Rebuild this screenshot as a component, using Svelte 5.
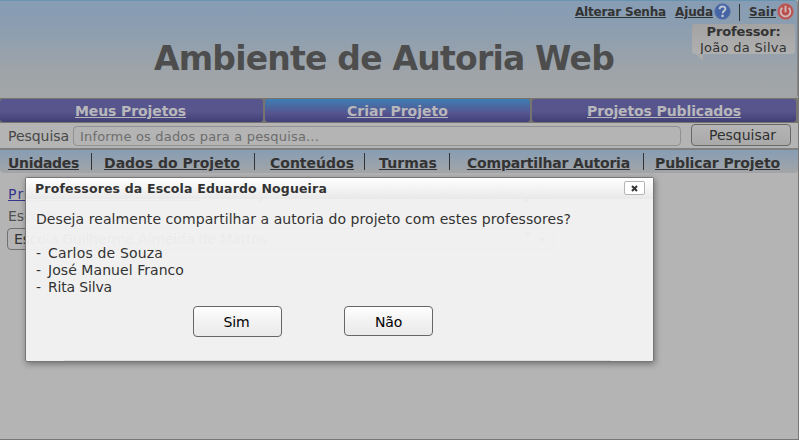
<script>
  const tabs = [
    { label: 'Meus Projetos', width: 264, shift: -2, text: 111 },
    { label: 'Criar Projeto', width: 267, shift: 0, text: 101, active: true },
    { label: 'Projetos Publicados', width: 266, shift: 0, text: 154 }
  ];
  const menu = [
    { label: 'Unidades', start: 8, text: 71 },
    { label: 'Dados do Projeto', start: 12, text: 136 },
    { label: 'Conteúdos', start: 15, text: 84 },
    { label: 'Turmas', start: 14, text: 58 },
    { label: 'Compartilhar Autoria', start: 17, text: 163 },
    { label: 'Publicar Projeto', start: 11, text: 125 }
  ];
  const gaps = [12, 14, 10, 12, 13, 0];
  const people = [
    { name: 'Carlos de Souza', width: 115 },
    { name: 'José Manuel Franco', width: 136 },
    { name: 'Rita Silva', width: 64 }
  ];

  // Spreads a label over a given width by adjusting its letter spacing.
  function fit(node, width) {
    node.style.letterSpacing = '0px';
    const count = node.textContent.length;
    const natural = node.getBoundingClientRect().width;
    node.style.letterSpacing = `${(width - natural) / count}px`;
  }
</script>

<div class="page">
  <header>
    <div class="account">
      <a class="senha" href="#senha"><span use:fit={91}>Alterar Senha</span></a>
      <a class="ajuda" href="#ajuda"><span use:fit={38}>Ajuda</span></a>
      <svg class="help" width="17" height="17" viewBox="0 0 17 17">
        <circle cx="8.5" cy="8.5" r="8" fill="#4464a5" stroke="#7085b0" />
        <path d="M5.6 6.2c0-3.8 6-3.6 5.8-.3-.1 2-2.7 2-2.7 4.4" fill="none" stroke="#bdc6d2" stroke-width="2" />
        <circle cx="8.6" cy="12.9" r="1.3" fill="#bdc6d2" />
      </svg>
      <i class="sep"></i>
      <a class="sair" href="#sair"><span use:fit={27}>Sair</span></a>
      <svg class="power" width="17" height="17" viewBox="0 0 17 17">
        <circle cx="8.5" cy="8.5" r="8" fill="#b94e4c" stroke="#ae7c80" />
        <path d="M5.4 4.8a4.9 4.9 0 1 0 6.2 0M8.5 2.8v6.4" fill="none" stroke="#d1b8b8" stroke-width="1.9" />
      </svg>
    </div>
    <h1><span use:fit={460}>Ambiente de Autoria Web</span></h1>
    <div class="user">
      <b><span use:fit={74}>Professor:</span></b>
      <div><span use:fit={87}>João da Silva</span></div>
    </div>
  </header>
  <nav class="tabs">
    {#each tabs as t}
      <div class="tab" class:active={t.active} style:width="{t.width}px">
        <a href="#tab" style:margin-left="{t.shift}px"><span use:fit={t.text}>{t.label}</span></a>
      </div>
    {/each}
  </nav>
  <div class="search">
    <label for="q"><span use:fit={61}>Pesquisa</span></label>
    <div class="input" id="q"><span use:fit={239}>Informe os dados para a pesquisa...</span></div>
    <button class="go"><span use:fit={67}>Pesquisar</span></button>
  </div>
  <nav class="menu">
    {#each menu as m, i}
      <a href="#menu" style:margin-left="{m.start}px" style:width="{m.text}px"><span use:fit={m.text}>{m.label}</span></a>
      {#if i < 5}<i style:margin-left="{gaps[i]}px"></i>{/if}
    {/each}
  </nav>
  <main>
    <h2><a href="#projeto"><span use:fit={193}>Projeto O dia da Árvore</span></a><span class="sub"><span use:fit={333}>Compartilhamento da Autoria do Projeto</span></span></h2>
    <div class="label">Escola:</div>
    <div class="select"><span use:fit={253}>Escola Guilherme Almeida de Mattos</span><b>*</b><i></i></div>
  </main>

  <section class="dialog">
    <div class="title">
      <b><span use:fit={292}>Professores da Escola Eduardo Nogueira</span></b>
      <button class="close" aria-label="Fechar">
        <svg width="7" height="7" viewBox="0 0 7 7"><path d="M1 1l5 5M6 1L1 6" stroke="#333" stroke-width="2" /></svg>
      </button>
    </div>
    <div class="body">
      <p><span use:fit={535}>Deseja realmente compartilhar a autoria do projeto com estes professores?</span></p>
      <div class="people">
        {#each people as p}
          <div class="person"><span class="dash">-</span><span use:fit={p.width}>{p.name}</span></div>
        {/each}
      </div>
      <div class="actions">
        <button class="sim"><span use:fit={26}>Sim</span></button>
        <button class="nao"><span use:fit={27}>Não</span></button>
      </div>
    </div>
    <div class="edge"></div>
  </section>
</div>

<style>
  :global(body) { background: #b4b4b4; }
  .page {
    position: relative; box-sizing: border-box; width: 799px; height: 440px; overflow: hidden;
    background: #b4b4b4; border-bottom: 1px solid #777; border-right: 1px solid #777;
    font: 14px/17px Verdana, "DejaVu Sans", sans-serif; color: #333;
  }
  span { white-space: nowrap; }
  header {
    position: relative; height: 98px; box-sizing: border-box; border-top: 1px solid #6794ae;
    border-right: 1px solid #858585; border-radius: 0 4px 4px 0;
    background: linear-gradient(#879db5 0, #8b9eb1 25%, #9fa4a8 75%, #a3a6a7 100%);
  }
  .account { display: flex; height: 22px; padding: 2px 0 0 575px; box-sizing: border-box; font-size: 12px; font-weight: bold; }
  .account a { color: #333; line-height: 19px; flex: none; }
  .senha { width: 91px; }
  .ajuda { width: 38px; margin-left: 9px; }
  .account svg { flex: none; }
  .help { margin-left: 1px; }
  .sep { width: 1px; height: 17px; margin: 1px 0 0 8px; background: #333; }
  .sair { width: 27px; margin-left: 9px; }
  .power { margin-left: 1px; }
  h1 { margin: 15px 0 0 154px; font-size: 33px; line-height: 42px; color: #4d4d4d; }
  .user {
    position: absolute; left: 692px; top: 23px; width: 103px; height: 30px; border-radius: 3px;
    background: linear-gradient(#a3a3a3, #b0b0b0); text-align: center;
  }
  .user b { display: block; font-size: 13px; line-height: 16px; }
  .user div { font-size: 13px; line-height: 15px; }
  .user::after { content: ''; position: absolute; left: 4px; top: 30px; border-top: 7px solid #acacac; border-left: 7px solid transparent; }
  .tabs { display: flex; height: 25px; background: #777370; }
  .tab {
    box-sizing: border-box; height: 25px; border: 1px solid #777370; border-width: 1px 1px 1px 0; border-radius: 4px;
    background: linear-gradient(#57558e, #57558b 55%, #403f75); text-align: center; line-height: 24px; font-weight: bold;
  }
  .tab + .tab { border-left-width: 1px; }
  .active { background: linear-gradient(#3d7eb3, #565690 60%, #41407b); }
  .tab a { color: #b8b8bc; }
  .search { display: flex; height: 25px; align-items: center; padding-left: 8px; }
  .search label { width: 65px; line-height: 25px; padding-top: 2px; color: #484848; }
  .input {
    box-sizing: border-box; width: 608px; height: 20px; border: 1px solid #919191; border-radius: 4px;
    padding-left: 6px; font-size: 13px; line-height: 19px; color: #6d6d6d; background: #b4b4b4; margin-top: 1px;
  }
  button { font-family: inherit; padding: 0; }
  .go {
    width: 100px; height: 22px; margin: 0 0 1px 10px; padding: 1px 0 0 3px; border: 1px solid #686868; border-radius: 4px;
    background: linear-gradient(#b5b5b5, #a9a9a9); font-size: 14px; line-height: 19px; color: #303030;
  }
  .menu {
    display: flex; height: 25px; box-sizing: border-box; border-top: 2px solid #818181; border-radius: 0 0 4px 4px;
    background: linear-gradient(#879db4, #a3a5a7); font-weight: bold;
  }
  .menu a { color: #333; line-height: 26px; flex: none; }
  .menu i { width: 1px; height: 17px; margin-top: 3px; background: #333; flex: none; }
  main { padding: 11px 8px; }
  h2 { margin: 0; display: flex; font: inherit; line-height: 20px; }
  h2 a { color: #35358d; width: 193px; }
  .sub { margin-left: 22px; font-weight: bold; }
  .label { margin-top: 3px; line-height: 18px; color: #505050; }
  .select {
    display: flex; box-sizing: border-box; width: 547px; height: 22px; margin: 3px 0 0 -1px; border: 1px solid #707070;
    border-radius: 4px; padding-left: 6px; line-height: 21px;
  }
  .select b { margin-left: 257px; font-size: 12px; line-height: 14px; }
  .select i { margin: 9px 0 0 8px; width: 0; height: 0; border: 4px solid transparent; border-top-color: #555; }
  .dialog {
    position: absolute; box-sizing: border-box; left: 25px; top: 177px; width: 629px; height: 185px;
    border: 1px solid #777; border-radius: 2px; background: rgba(242, 242, 242, .96); box-shadow: 1px 2px 6px rgba(0, 0, 0, .38);
  }
  .title {
    display: flex; justify-content: space-between; height: 21px; padding: 0 8px 0 9px;
    background: linear-gradient(rgba(255,255,255,.95), rgba(232,232,232,.9)); font-size: 12.5px; line-height: 21px;
  }
  .close {
    display: flex; align-items: center; justify-content: center; box-sizing: border-box; width: 21px; height: 14px;
    margin-top: 3px; border: 1px solid #b5b5b5; border-radius: 2px; background: #fff;
  }
  .body { padding: 12px 10px 0; font-size: 14px; }
  p { margin: 0; line-height: 17px; }
  .people { margin-top: 17px; }
  .person { display: flex; }
  .dash { width: 12px; }
  .actions { display: flex; padding-left: 157px; gap: 62px; margin-top: 10px; }
  .actions button {
    width: 89px; height: 31px; border: 1px solid #666; border-radius: 4px; background: linear-gradient(#fff, #f2f2f2 50%, #eaeaea);
    color: #000; font-size: 14px;
  }
  .actions .sim { padding-right: 2px; }
  .actions .nao { height: 30px; padding-top: 2px; }
  .edge { height: 1px; margin: 23px 42px 0 38px; background: #ddd; }
</style>
